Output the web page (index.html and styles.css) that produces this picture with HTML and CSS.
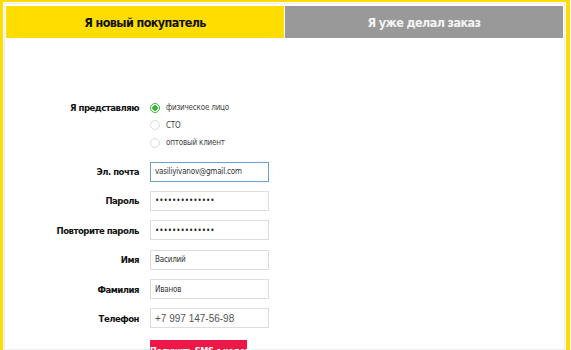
FILE: index.html
```html
<!DOCTYPE html>
<html lang="ru">
<head>
    <meta charset="UTF-8">
    <meta name="viewport" content="width=device-width, initial-scale=1.0">
    <title>Регистрация</title>
    <link rel="stylesheet" href="styles.css">
</head>
<body>
    <div class="frame">
        <div class="box">
            <div class="tabs">
                <div class="tab tab-active">Я новый покупатель</div>
                <div class="tab">Я уже делал заказ</div>
            </div>

            <form class="reg-form">
                <div class="row row-radio">
                    <span class="label">Я представляю</span>
                    <div class="radio-list">
                        <label class="radio"><span class="dot checked"></span>физическое лицо</label>
                        <label class="radio"><span class="dot"></span>СТО</label>
                        <label class="radio"><span class="dot"></span>оптовый клиент</label>
                    </div>
                </div>
                <div class="row">
                    <span class="label">Эл. почта</span>
                    <div class="input focus">vasiliyivanov@gmail.com</div>
                </div>
                <div class="row">
                    <span class="label">Пароль</span>
                    <div class="input pass">••••••••••••••</div>
                </div>
                <div class="row">
                    <span class="label">Повторите пароль</span>
                    <div class="input pass">••••••••••••••</div>
                </div>
                <div class="row">
                    <span class="label">Имя</span>
                    <div class="input">Василий</div>
                </div>
                <div class="row">
                    <span class="label">Фамилия</span>
                    <div class="input">Иванов</div>
                </div>
                <div class="row">
                    <span class="label">Телефон</span>
                    <div class="input phone">+7 997 147-56-98</div>
                </div>
                <div class="row">
                    <span class="label"></span>
                    <button type="button" class="sms-btn">Получить SMS с кодом</button>
                </div>
            </form>
        </div>
    </div>
</body>
</html>
```

FILE: styles.css
```css
html, body {
    margin: 0;
    height: 350px;
    overflow: hidden;
    background-color: white;
}
body {
    font-family: "DejaVu Sans Condensed", "Liberation Sans", sans-serif;
    color: #222;
}
.frame {
    width: 563px;
    height: 400px;
    border: 3px solid #ffdd00;
    border-top-width: 2px;
    border-right-width: 4px;
    border-bottom: none;
}
.box {
    height: 343px;
    margin: 1px 1px 0 1px;
    padding: 2px 1px 0 1px;
    border: 1px solid #eeeeee;
}
.tabs {
    display: flex;
    height: 32px;
}
.tab {
    flex: 1;
    display: flex;
    align-items: center;
    justify-content: center;
    background-color: #999999;
    color: #f4f4f4;
    font-size: 12.5px;
    font-weight: bold;
    letter-spacing: -0.6px;
}
.tab-active {
    background-color: #ffdd00;
    color: #111;
    margin-right: 1px;
}
.reg-form {
    padding-top: 61px;
}
.row {
    display: flex;
    align-items: center;
    margin-bottom: 9.4px;
}
.label {
    width: 133px;
    margin-right: 11px;
    text-align: right;
    font-size: 9.5px;
    font-weight: bold;
    letter-spacing: -0.5px;
    color: #111;
}
.row-radio {
    align-items: flex-start;
    margin-bottom: 10px;
}
.row-radio .label {
    line-height: 18px;
}
.radio-list {
    display: flex;
    flex-direction: column;
}
.radio {
    display: flex;
    align-items: center;
    height: 17.5px;
    font-size: 8px;
    letter-spacing: -0.2px;
    color: #444;
}
.dot {
    box-sizing: border-box;
    width: 10px;
    height: 10px;
    margin-right: 6px;
    border: 1px solid #dddddd;
    border-radius: 50%;
}
.dot.checked {
    border-color: #3cb43c;
    background: radial-gradient(circle, #3cb43c 0 2.5px, white 3px);
}
.input {
    box-sizing: border-box;
    width: 119px;
    height: 20px;
    padding-left: 4px;
    border: 1px solid #dddddd;
    display: flex;
    align-items: center;
    font-size: 8px;
    letter-spacing: -0.2px;
    color: #333;
}
.input.focus {
    border-color: #6a9fd0;
}
.input.pass {
    font-size: 8px;
    letter-spacing: 0;
    color: #222;
}
.input.phone {
    font-family: "Liberation Sans", sans-serif;
    font-size: 10px;
    letter-spacing: 0;
    color: #555;
}
.sms-btn {
    width: 97px;
    height: 22px;
    margin-top: 2px;
    border: none;
    background-color: #ee1848;
    color: white;
    font-family: inherit;
    font-size: 9px;
    font-weight: bold;
    letter-spacing: -0.3px;
    white-space: nowrap;
    padding: 0;
}
```
